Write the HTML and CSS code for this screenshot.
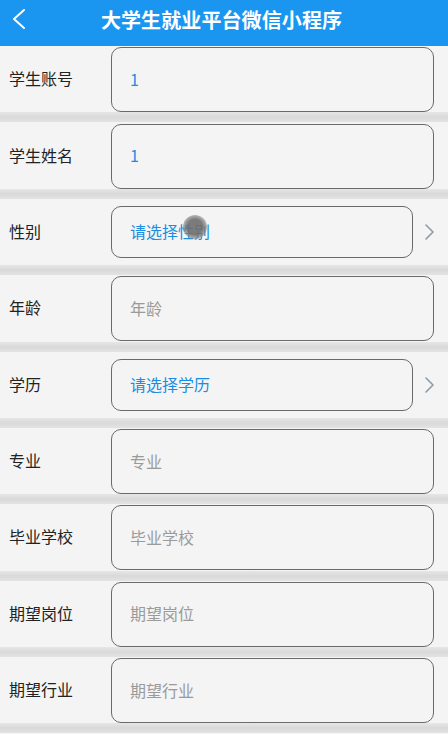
FILE: index.html
```html
<!DOCTYPE html>
<html lang="zh-CN">
<head>
<meta charset="utf-8">
<title>大学生就业平台微信小程序</title>
<link rel="stylesheet" href="styles.css">
</head>
<body>
<header class="topbar">
  <svg class="back" width="16" height="22" viewBox="0 0 16 22"><polyline points="13,2 3,11 13,20" fill="none" stroke="#fff" stroke-width="2" stroke-linecap="round" stroke-linejoin="round"/></svg>
  <h1 class="title">大学生就业平台微信小程序</h1>
</header>
<main class="form">
  <div class="row"><span class="label">学生账号</span><div class="box"><span class="value">1</span></div></div>
  <div class="sep"></div>
  <div class="row"><span class="label">学生姓名</span><div class="box"><span class="value">1</span></div></div>
  <div class="sep"></div>
  <div class="row select-row"><span class="label">性别</span><div class="box pick"><span class="value">请选择性别</span><span class="touch"></span></div>
    <svg class="arrow" width="12" height="18" viewBox="0 0 12 18"><polyline points="3,2 10,9 3,16" fill="none" stroke="#8d9ba8" stroke-width="1.6" stroke-linecap="round" stroke-linejoin="round"/></svg></div>
  <div class="sep"></div>
  <div class="row"><span class="label">年龄</span><div class="box"><span class="ph">年龄</span></div></div>
  <div class="sep"></div>
  <div class="row select-row"><span class="label">学历</span><div class="box pick"><span class="value">请选择学历</span></div>
    <svg class="arrow" width="12" height="18" viewBox="0 0 12 18"><polyline points="3,2 10,9 3,16" fill="none" stroke="#8d9ba8" stroke-width="1.6" stroke-linecap="round" stroke-linejoin="round"/></svg></div>
  <div class="sep"></div>
  <div class="row"><span class="label">专业</span><div class="box"><span class="ph">专业</span></div></div>
  <div class="sep"></div>
  <div class="row"><span class="label">毕业学校</span><div class="box"><span class="ph">毕业学校</span></div></div>
  <div class="sep"></div>
  <div class="row"><span class="label">期望岗位</span><div class="box"><span class="ph">期望岗位</span></div></div>
  <div class="sep"></div>
  <div class="row"><span class="label">期望行业</span><div class="box"><span class="ph">期望行业</span></div></div>
  <div class="sep"></div>
</main>
</body>
</html>
```
FILE: styles.css
```css
* { box-sizing: border-box; }
html, body { margin: 0; padding: 0; }
body {
  width: 448px;
  height: 734px;
  overflow: hidden;
  background: #f4f4f4;
  font-family: "Noto Sans CJK SC", "Noto Sans", sans-serif;
  color: #222;
}
.topbar {
  height: 46px;
  background: #1a96f0;
  display: flex;
  align-items: center;
  justify-content: center;
  position: relative;
}
.back {
  position: absolute;
  left: 11px;
  top: 8px;
}
.title {
  margin: 0 0 0 -5px;
  font-size: 20px;
  font-weight: 700;
  color: #fff;
  letter-spacing: 0.1px;
  line-height: 1;
  padding-bottom: 7px;
}
.form { display: flex; flex-direction: column; }
.row {
  height: 66.375px;
  display: flex;
  align-items: center;
  padding-top: 1px;
  background: #f4f4f4;
}
.label {
  width: 111px;
  flex: none;
  padding-left: 9px;
  padding-bottom: 3px;
  font-size: 16px;
  line-height: 1;
  color: #222;
}
.box {
  flex: 1;
  height: 65px;
  margin-right: 14px;
  border: 1px solid #6a6a6a;
  border-radius: 10px;
  display: flex;
  align-items: center;
  padding-left: 18px;
  padding-bottom: 2px;
  font-size: 16px;
  line-height: 1;
  position: relative;
}
.select-row .box {
  height: 52px;
  margin-right: 0;
}
.arrow {
  flex: none;
  margin: 0 13px 0 10px;
}
.value { color: #1a8de3; }
.ph { color: #9a9a9a; }
.touch {
  position: absolute;
  left: 71px;
  top: 8px;
  width: 24px;
  height: 24px;
  border-radius: 50%;
  background: radial-gradient(circle, rgba(110,110,110,0.9) 45%, rgba(140,140,140,0.6) 70%, rgba(180,180,180,0) 100%);
}
.sep {
  height: 10px;
  background: linear-gradient(#e6e6e6, #d9d9d9 50%, #e3e3e3);
}
```
